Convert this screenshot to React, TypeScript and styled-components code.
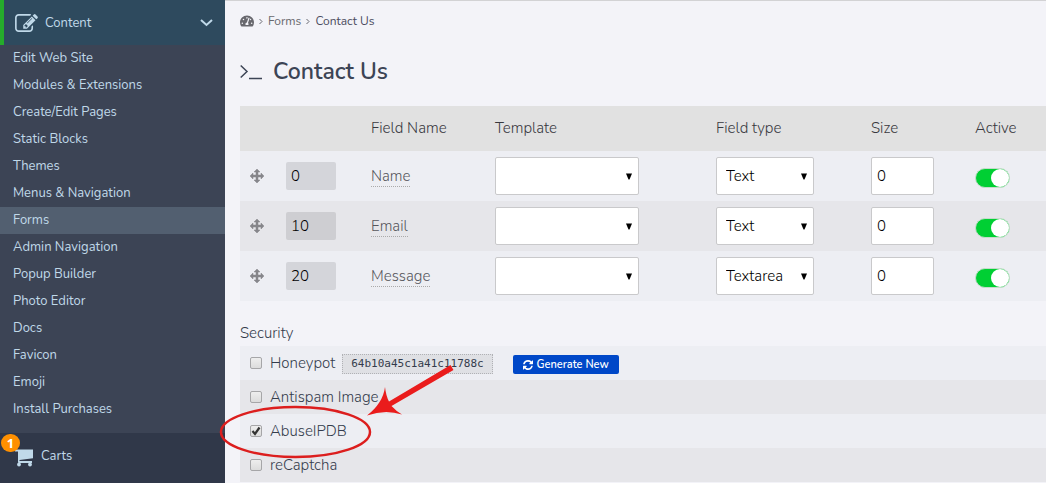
import React from "react";
import styled, { createGlobalStyle, css } from "styled-components";
import { FaTachometerAlt } from "react-icons/fa";

const font = `"Nunito", "Lato", "Open Sans", sans-serif`;

const GlobalStyle = createGlobalStyle`
  *, *::before, *::after { box-sizing: border-box; }
  body {
    margin: 0;
    background: #f3f3f8;
    color: #343c4c;
    font: 300 15px/20px ${font};
  }
  button, input, select { font: inherit; }
`;

const Page = styled.div`
  display: grid;
  grid-template-columns: 225px minmax(0, 1fr);
  min-height: 100vh;
`;

const Sidebar = styled.nav`
  display: flex;
  flex-direction: column;
  background: #3c4455;
  color: #c0d9e9;
  font-size: 13px;
  font-weight: 400;
`;

const SectionButton = styled.button`
  display: flex;
  align-items: center;
  height: 45px;
  padding: 0 12px 0 11px;
  border: 0;
  border-left: 4px solid #25ac2b;
  background: #2e4a5e;
  color: inherit;
  text-align: left;
  cursor: pointer;
`;

const SectionLabel = styled.span`
  flex: 1;
  margin-left: 7px;
`;

const MenuList = styled.ul`
  margin: 0;
  padding: 0 0 10px;
  list-style: none;
`;

const MenuLink = styled.a<{ $active?: boolean }>`
  display: block;
  height: 27px;
  padding-left: 13px;
  line-height: 26px;
  color: inherit;
  text-decoration: none;
  background: ${(p) => (p.$active ? "#525f70" : "transparent")};
`;

const CartsLink = styled.a`
  flex: 1;
  display: flex;
  align-items: flex-start;
  min-height: 50px;
  padding: 13px 0 0 15px;
  background: #303849;
  color: inherit;
  text-decoration: none;
`;

const CartIcon = styled.span`
  position: relative;
  width: 26px;
  height: 20px;

  svg { display: block; margin-top: 3px; }
`;

const Badge = styled.span`
  position: absolute;
  left: -14px;
  top: -12px;
  width: 19px;
  height: 18px;
  border-radius: 9px;
  background: #ff9000;
  color: #fff;
  font: 700 13px/18px "Open Sans", sans-serif;
  text-align: center;
`;

const Main = styled.main`
  min-width: 0;
  padding-left: 15px;
  border-top: 1px solid #d2d2d4;
`;

const Breadcrumbs = styled.nav`
  display: flex;
  align-items: center;
  gap: 5px;
  height: 20px;
  margin-top: 10px;
  font-size: 12px;
  font-weight: 400;
  color: #4c4c60;

  a { display: flex; color: #68686e; text-decoration: none; }
`;

const Title = styled.h1`
  display: flex;
  align-items: center;
  gap: 11px;
  height: 30px;
  margin: 26px 0 19px;
  font-size: 23px;
  line-height: 30px;
  font-weight: 600;
  color: #3c4455;
`;

const FieldTable = styled.table`
  width: 100%;
  table-layout: fixed;
  border-collapse: collapse;

  th {
    height: 45px;
    padding: 0 0 2px;
    background: #e1e1e1;
    color: #38383e;
    font-weight: inherit;
    text-align: left;
  }
  td { height: 50px; padding: 0; }
  tbody tr { background: #edeef3; }
  tbody tr:nth-child(even) { background: #e6e6ea; }
`;

const Col = styled.col<{ $width?: number }>`
  ${(p) => p.$width && css`width: ${p.$width}px;`}
`;

const HandleButton = styled.button`
  display: block;
  margin-left: 10px;
  padding: 0;
  border: 0;
  background: none;
  color: #86868b;
  cursor: move;

  svg { display: block; }
`;

const OrderInput = styled.input`
  display: block;
  width: 50px;
  height: 28px;
  padding: 0 5px;
  border: 0;
  border-radius: 2px;
  background: rgba(0, 0, 0, 0.1);
  color: #000;
`;

const NameLink = styled.a`
  display: inline-block;
  border-bottom: 1px dotted #aaa;
  color: #56565c;
  text-decoration: none;
`;

const box = css`
  display: block;
  height: 38px;
  border: 1px solid #c9c9cb;
  border-radius: 2px;
  background: #fff;
  color: #000;
`;

const SelectWrap = styled.div<{ $width: number }>`
  position: relative;
  width: ${(p) => p.$width}px;

  svg {
    position: absolute;
    right: 7px;
    top: 16px;
    pointer-events: none;
  }
`;

const Select = styled.select`
  ${box}
  width: 100%;
  padding: 0 20px 0 9px;
  appearance: none;
`;

const SizeInput = styled.input`
  ${box}
  width: 63px;
  padding: 0 5px;
`;

const Toggle = styled.input`
  appearance: none;
  display: block;
  width: 35px;
  height: 20px;
  margin: 4px 0 0;
  padding: 1px 0;
  border-radius: 10px;
  border: 1px solid #c4dcca;
  background: #ccc;

  &::before {
    content: "";
    display: block;
    width: 18px;
    height: 18px;
    margin-top: -1px;
    border-radius: 50%;
    background: #fff;
  }
  &:checked { background: #00cf33; }
  &:checked::before { margin-left: 15px; }
`;

const SecurityHeading = styled.h2`
  margin: 22px 0 3px;
  font-size: 15px;
  line-height: 20px;
  font-weight: inherit;
`;

const SecurityList = styled.div`
  position: relative;
`;

const SecurityRow = styled.div`
  display: flex;
  align-items: center;
  height: 34px;
  padding-left: 10px;
  background: #edeef3;

  &:nth-child(even) { background: #e6e6ea; }
`;

const OptionLabel = styled.label`
  display: flex;
  align-items: center;
  gap: 8px;
`;

const CheckBox = styled.span`
  position: relative;
  display: flex;

  svg {
    position: absolute;
    left: 1px;
    top: 1px;
    display: none;
    pointer-events: none;
  }
  input:checked + svg { display: block; }
`;

const Check = styled.input`
  appearance: none;
  width: 12px;
  height: 12px;
  margin: 0;
  border: 1px solid #a6a6a8;
  border-radius: 2px;
  background: linear-gradient(#eee, #dcdcdc);
`;

const KeyCode = styled.code`
  height: 20px;
  margin: 2px 20px 0 7px;
  padding: 0 8px;
  border: 1px dotted #b0b1b5;
  background: #dfe0e4;
  font: 400 11px/18px "DejaVu Sans Mono", monospace;
`;

const GenerateButton = styled.button`
  display: flex;
  align-items: center;
  justify-content: center;
  gap: 4px;
  width: 106px;
  height: 19px;
  margin-top: 3px;
  padding: 0;
  border: 0;
  border-radius: 2px;
  background: #0048c8;
  color: #fff;
  font-size: 11px;
  font-weight: 600;
`;

const Annotation = styled.svg`
  position: absolute;
  left: -22px;
  top: 14px;
  pointer-events: none;
`;

const EditIcon = () => (
  <svg width="23" height="18" viewBox="0 128 1792 1408" fill="currentColor" aria-hidden="true">
    <path d="M888 1184l116-116-152-152-116 116v56h96v96h56zm440-720q-16-16-33 1l-350 350q-17 17-1 33t33-1l350-350q17-17 1-33zm80 594v190q0 119-84.500 203.500t-203.500 84.500h-832q-119 0-203.500-84.500t-84.500-203.500v-832q0-119 84.500-203.500t203.500-84.500h832q63 0 117 25 15 7 18 23 3 17-9 29l-49 49q-14 14-32 8-23-6-45-6h-832q-66 0-113 47t-47 113v832q0 66 47 113t113 47h832q66 0 113-47t47-113v-126q0-13 9-22l64-64q15-15 35-7t20 29zm-96-738l288 288-672 672h-288v-288zm444 132l-92 92-288-288 92-92q28-28 68-28t68 28l152 152q28 28 28 68t-28 68z" />
  </svg>
);

const MoveIcon = () => (
  <svg width="14" height="14" viewBox="0 0 14 14" fill="currentColor" aria-hidden="true">
    <path d="M7 0l3 3H8v3h3V4l3 3-3 3V8H8v3h2l-3 3-3-3h2V8H3v2L0 7l3-3v2h3V3H4z" stroke="currentColor" strokeWidth="0.500" />
  </svg>
);

const Arrow = () => (
  <svg width="6" height="7" viewBox="0 0 6 7" aria-hidden="true">
    <path d="M0 0.500h6L3.500 6.500h-1z" fill="#000" />
  </svg>
);

const Separator = () => (
  <svg width="4" height="7" viewBox="0 0 4 7" fill="none" stroke="#66666e" aria-hidden="true">
    <path d="M.5 1l2.500 2.500L.5 6" />
  </svg>
);

const RefreshIcon = () => (
  <svg width="10" height="10" viewBox="0 0 1536 1536" fill="currentColor" aria-hidden="true">
    <path d="M1511 928q0 5-1 7-64 268-268 434.500T764 1536q-146 0-282.500-55T238 1324l-129 129q-19 19-45 19t-45-19-19-45V960q0-26 19-45t45-19h448q26 0 45 19t19 45-19 45l-137 137q71 66 161 102t187 36q134 0 250-65t186-179q11-17 53-117 8-23 30-23h192q13 0 22.500 9.500t9.500 22.500zm25-800v448q0 26-19 45t-45 19h-448q-26 0-45-19t-19-45 19-45l138-138Q969 256 768 256q-134 0-250 65T332 500q-11 17-53 117-8 23-30 23H50q-13 0-22.500-9.500T18 608v-7q65-268 270-434.500T768 0q146 0 284 55.500T1297 212l130-129q19-19 45-19t45 19 19 45z" />
  </svg>
);

const menu = [
  "Edit Web Site", "Modules & Extensions", "Create/Edit Pages", "Static Blocks", "Themes",
  "Menus & Navigation", "Forms", "Admin Navigation", "Popup Builder", "Photo Editor",
  "Docs", "Favicon", "Emoji", "Install Purchases",
];

const fields = [
  { order: "0", name: "Name", type: "Text" },
  { order: "10", name: "Email", type: "Text" },
  { order: "20", name: "Message", type: "Textarea" },
];

const security = ["Honeypot", "Antispam Image", "AbuseIPDB", "reCaptcha"];

export default function App() {
  return (
    <>
      <GlobalStyle />
      <Page>
        <Sidebar aria-label="Admin">
          <SectionButton aria-expanded="true">
            <EditIcon />
            <SectionLabel>Content</SectionLabel>
            <svg width="13" height="8" viewBox="0 0 13 8" fill="none" stroke="currentColor" strokeWidth="2" aria-hidden="true">
              <path d="M1 1l5.500 5L12 1" />
            </svg>
          </SectionButton>
          <MenuList>
            {menu.map((item) => (
              <li key={item}>
                <MenuLink href="#" $active={item === "Forms"}>{item}</MenuLink>
              </li>
            ))}
          </MenuList>
          <CartsLink href="#">
            <CartIcon>
              <svg width="19" height="18" viewBox="0 0 19 18" fill="currentColor" aria-hidden="true">
                <path d="M0 .5h18v8.700L4.500 11v1H17v2H3.500L3 13V2.500H0z" />
                <circle cx="4" cy="15.500" r="1.900" />
                <circle cx="15" cy="15.500" r="1.900" />
              </svg>
              <Badge>1</Badge>
            </CartIcon>
            Carts
          </CartsLink>
        </Sidebar>

        <Main>
          <Breadcrumbs aria-label="Breadcrumb">
            <a href="#" aria-label="Dashboard"><FaTachometerAlt size={14} /></a>
            <Separator />
            <a href="#">Forms</a>
            <Separator />
            <span>Contact Us</span>
          </Breadcrumbs>
          <Title>
            <svg width="22" height="16" viewBox="0 0 22 16" fill="none" stroke="currentColor" strokeWidth="1.500" aria-hidden="true">
              <path d="M.7 1.500L7 7.500l-6.300 6M9 14.500h13" />
            </svg>
            Contact Us
          </Title>

          <FieldTable>
            <colgroup>
              <Col $width={46} />
              <Col $width={85} />
              <Col $width={124} />
              <Col $width={221} />
              <Col $width={155} />
              <Col $width={104} />
              <Col />
            </colgroup>
            <thead>
              <tr>
                <th aria-label="Move" />
                <th aria-label="Order" />
                <th>Field Name</th>
                <th>Template</th>
                <th>Field type</th>
                <th>Size</th>
                <th>Active</th>
              </tr>
            </thead>
            <tbody>
              {fields.map((f) => (
                <tr key={f.name}>
                  <td><HandleButton aria-label={`Move ${f.name}`}><MoveIcon /></HandleButton></td>
                  <td><OrderInput aria-label="Order" defaultValue={f.order} /></td>
                  <td><NameLink href="#">{f.name}</NameLink></td>
                  <td>
                    <SelectWrap $width={144}>
                      <Select aria-label="Template"><option /></Select>
                      <Arrow />
                    </SelectWrap>
                  </td>
                  <td>
                    <SelectWrap $width={98}>
                      <Select aria-label="Field type" defaultValue={f.type}>
                        <option>Text</option>
                        <option>Textarea</option>
                      </Select>
                      <Arrow />
                    </SelectWrap>
                  </td>
                  <td><SizeInput aria-label="Size" defaultValue="0" /></td>
                  <td><Toggle type="checkbox" role="switch" aria-label="Active" defaultChecked /></td>
                </tr>
              ))}
            </tbody>
          </FieldTable>

          <SecurityHeading>Security</SecurityHeading>
          <SecurityList>
            {security.map((name) => (
              <SecurityRow key={name}>
                <OptionLabel>
                  <CheckBox>
                    <Check type="checkbox" defaultChecked={name === "AbuseIPDB"} />
                    <svg width="10" height="10" viewBox="0 0 10 10" fill="none" stroke="#333" strokeWidth="2.200" aria-hidden="true">
                      <path d="M1.500 5l2.500 3L8.500 1.500" />
                    </svg>
                  </CheckBox>
                  {name}
                </OptionLabel>
                {name === "Honeypot" && (
                  <>
                    <KeyCode>64b10a45c1a41c11788c</KeyCode>
                    <GenerateButton><RefreshIcon />Generate New</GenerateButton>
                  </>
                )}
              </SecurityRow>
            ))}
            <Annotation width="240" height="104" viewBox="218 360 240 104" aria-hidden="true">
              <ellipse cx="295.500" cy="432" rx="74.500" ry="25" fill="none" stroke="#dc1e1e" strokeWidth="2.500" />
              <path d="M367 415.500Q383 403 385 387Q386 396 389 401.500L450.500 365l3 5L391.500 406Q396 411 402 414.500Q385 409 367 415.500z" fill="#ea1c1c" />
            </Annotation>
          </SecurityList>
        </Main>
      </Page>
    </>
  );
}
